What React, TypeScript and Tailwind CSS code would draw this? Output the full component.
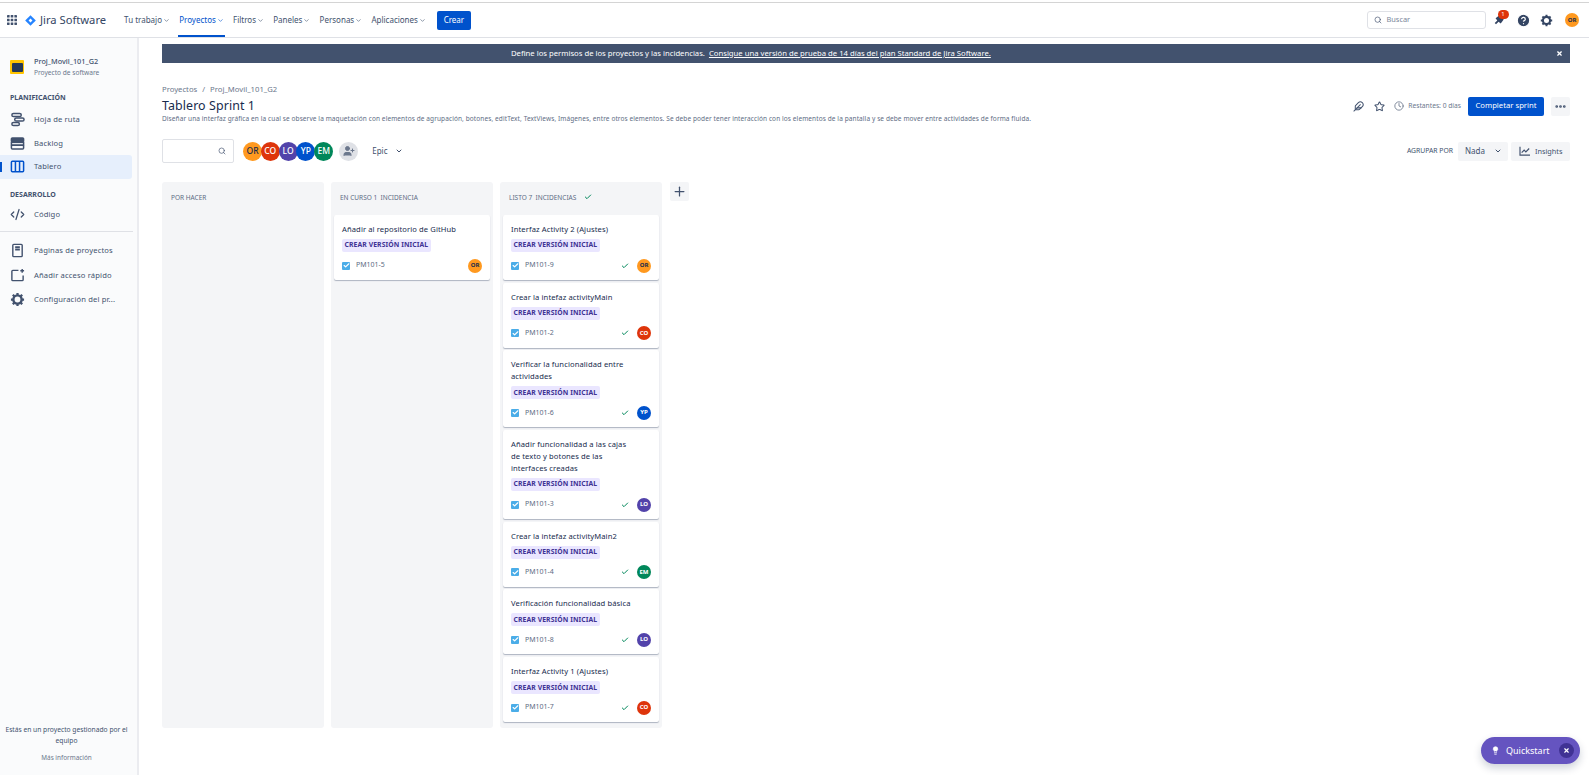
import { ChevronDown, Search, HelpCircle, X, Star, Clock, Plus, Check, MoreHorizontal, CodeXml, Lightbulb, UserPlus, Feather } from 'lucide-react'

const people: Record<string, string> = {
  OR: 'bg-[#ff991f] text-[#172b4d]',
  CO: 'bg-[#de350b] text-white',
  LO: 'bg-[#5243aa] text-white',
  YP: 'bg-[#0052cc] text-white',
  EM: 'bg-[#00875a] text-white',
}

const navItems = ['Tu trabajo', 'Proyectos', 'Filtros', 'Paneles', 'Personas', 'Aplicaciones']

const doneCards = [
  { lines: ['Interfaz Activity 2 (Ajustes)'], id: 'PM101-9', who: 'OR' },
  { lines: ['Crear la intefaz activityMain'], id: 'PM101-2', who: 'CO' },
  { lines: ['Verificar la funcionalidad entre', 'actividades'], id: 'PM101-6', who: 'YP' },
  { lines: ['Añadir funcionalidad a las cajas', 'de texto y botones de las', 'interfaces creadas'], id: 'PM101-3', who: 'LO' },
  { lines: ['Crear la intefaz activityMain2'], id: 'PM101-4', who: 'EM' },
  { lines: ['Verificación funcionalidad básica'], id: 'PM101-8', who: 'LO' },
  { lines: ['Interfaz Activity 1 (Ajustes)'], id: 'PM101-7', who: 'CO' },
]

function Card({ lines, id, who, done }: { lines: string[]; id: string; who: string; done?: boolean }) {
  return (
    <div className="bg-white rounded-[2px] shadow-[0_1px_1px_rgba(9,30,66,0.3)] px-[8px] pt-[8px] pb-[7px] w-[156px] mx-auto">
      {lines.map((l) => (
        <div key={l} className="text-[7.6px] leading-[12px] text-[#172b4d] tracking-[0.1px] whitespace-nowrap">{l}</div>
      ))}
      <div className="mt-[4px] w-fit h-[13px] flex items-center bg-[#eae6ff] rounded-[2px] px-[2.5px] text-[6.8px] font-bold tracking-[0.1px] text-[#403294] whitespace-nowrap">
        CREAR VERSIÓN INICIAL
      </div>
      <div className="mt-[6px] flex items-center h-[15px]">
        <span className="w-[8px] h-[8px] rounded-[1px] bg-[#4bade8] flex items-center justify-center">
          <Check className="w-[7px] h-[7px] text-white" strokeWidth={4} />
        </span>
        <span className="ml-[6px] text-[7px] text-[#5e6c84]">{id}</span>
        <span className="flex-1" />
        {done && <Check className="w-[8px] h-[8px] text-[#00875a] mr-[8px]" strokeWidth={3} />}
        <span className={`w-[14px] h-[14px] rounded-full flex items-center justify-center text-[6px] font-bold ${people[who]}`}>{who}</span>
      </div>
    </div>
  )
}

function Grid() {
  return (
    <svg viewBox="0 0 10 10" className="w-[10px] h-[10px] text-[#42526e]" fill="currentColor">
      {[0, 3.7, 7.4].map((y) => [0, 3.7, 7.4].map((x) => <rect key={`${x}-${y}`} x={x} y={y} width="2.6" height="2.6" rx="0.4" />))}
    </svg>
  )
}

// Jira's cog: a thick ring with eight short teeth
function Gear({ className }: { className: string }) {
  return (
    <svg viewBox="0 0 16 16" className={className} fill="none" stroke="currentColor">
      <circle cx="8" cy="8" r="4.4" strokeWidth="2.6" />
      <path d="M8 1v2.4M8 12.6V15M1 8h2.4M12.6 8H15M3 3l1.7 1.7M11.3 11.3 13 13M13 3l-1.7 1.7M4.7 11.3 3 13" strokeWidth="2.4" />
    </svg>
  )
}

function NavIcon({ name }: { name: string }) {
  const cls = 'w-[15px] h-[15px] text-[#42526e]'
  if (name === 'road') return (
    <svg viewBox="0 0 16 16" className={cls} fill="none" stroke="currentColor" strokeWidth="1.6">
      <rect x="2" y="1.5" width="10" height="3.4" rx="1.7" /><rect x="5" y="6.3" width="10" height="3.4" rx="1.7" /><rect x="2" y="11.1" width="8" height="3.4" rx="1.7" />
    </svg>
  )
  if (name === 'backlog') return (
    <svg viewBox="0 0 16 16" className={cls} fill="none" stroke="currentColor" strokeWidth="1.6">
      <rect x="1.5" y="2" width="13" height="4" rx="1" fill="currentColor" /><rect x="1.5" y="6.8" width="13" height="3" /><rect x="1.5" y="9.8" width="13" height="4" rx="1" />
    </svg>
  )
  if (name === 'board') return (
    <svg viewBox="0 0 16 16" className="w-[15px] h-[15px] text-[#0052cc]" fill="none" stroke="currentColor" strokeWidth="1.6">
      <rect x="1.5" y="2.5" width="13" height="11" rx="1" /><path d="M5.8 2.5v11M10.2 2.5v11" />
    </svg>
  )
  if (name === 'code') return <CodeXml className={cls} strokeWidth={2} />
  if (name === 'pages') return (
    <svg viewBox="0 0 16 16" className={cls} fill="none" stroke="currentColor" strokeWidth="1.5">
      <rect x="3" y="1.5" width="10" height="13" rx="1" /><path d="M5.5 4.5h5M5.5 7h5" strokeWidth="2" />
    </svg>
  )
  if (name === 'add') return (
    <svg viewBox="0 0 16 16" className={cls} fill="none" stroke="currentColor" strokeWidth="1.5">
      <path d="M9 2.5H3a1 1 0 0 0-1 1v9a1 1 0 0 0 1 1h10a1 1 0 0 0 1-1V8" /><path d="M13 1v4M11 3h4" />
    </svg>
  )
  return <Gear className={cls} />
}

function SideLink({ icon, label, active }: { icon: string; label: string; active?: boolean }) {
  return (
    <div className={`relative h-[23.5px] w-[132px] flex items-center pl-[10px] rounded-r-[3px] ${active ? 'bg-[#e6effc]' : ''}`}>
      {active && <span className="absolute left-0 top-[7px] w-[2px] h-[10px] bg-[#0052cc]" />}
      <NavIcon name={icon} />
      <span className="ml-[9px] text-[7.6px] tracking-[0.15px] text-[#42526e] whitespace-nowrap">{label}</span>
    </div>
  )
}

export default function App() {
  return (
    <div className="relative h-[775px] w-[1589px] overflow-hidden bg-white font-['Noto_Sans',sans-serif] text-[#172b4d]">
      {/* Top bar */}
      <header className="h-[36px] border-t-[1px] border-b-[1px] border-t-[#d4d4d4] border-b-[#dfe1e6] mt-[2px] flex items-center pl-[7px] pr-[10px]">
        <Grid />
        <svg viewBox="0 0 12 12" className="w-[11px] h-[11px] ml-[8px]">
          <path d="M6 0.2 11.8 6 6 11.8 0.2 6Z" fill="#2684ff" /><path d="M6 3.9 8.1 6 6 8.1 3.9 6Z" fill="#fff" />
        </svg>
        <span className="ml-[4px] text-[11.2px] text-[#344563] whitespace-nowrap">Jira Software</span>
        <nav className="ml-[17px] flex h-full items-stretch gap-[7.2px]">
          {navItems.map((n) => (
            <div key={n} className={`relative flex items-center px-[1px] text-[8px] whitespace-nowrap ${n === 'Proyectos' ? 'text-[#0052cc]' : 'text-[#42526e]'}`}>
              {n}
              <ChevronDown className="w-[7px] h-[7px] ml-[1px]" />
              {n === 'Proyectos' && <span className="absolute left-0 right-0 bottom-0 h-[2px] bg-[#0052cc]" />}
            </div>
          ))}
        </nav>
        <button className="ml-[10px] h-[19px] w-[34px] rounded-[2px] bg-[#0052cc] text-white text-[8px]">Crear</button>
        <div className="ml-auto w-[119px] h-[18px] rounded-[3px] border border-[#dfe1e6] flex items-center pl-[6px] text-[7.4px] text-[#7a869a]">
          <Search className="w-[8px] h-[8px] text-[#42526e] mr-[5px]" />
          Buscar
        </div>
        <div className="relative ml-[6px] w-[14px] flex justify-center">
          <svg viewBox="0 0 14 14" className="w-[12px] h-[12px] text-[#344563]" fill="currentColor">
            <path d="M7.5 1.5 12.5 6.5 9 11 6.5 9 3.5 12 2 10.5 5 7.5 3 5Z" />
          </svg>
          <span className="absolute -top-[4px] left-[6px] w-[11px] h-[9px] rounded-full bg-[#de350b] text-white text-[6px] leading-[9px] text-center">1</span>
        </div>
        <HelpCircle className="ml-[10.5px] w-[15px] h-[15px] text-white fill-[#344563]" strokeWidth={2} />
        <Gear className="ml-[9px] w-[13px] h-[13px] text-[#344563]" />
        <span className="ml-[12px] w-[14px] h-[14px] rounded-full bg-[#ff991f] text-[#172b4d] text-[6px] font-bold flex items-center justify-center">OR</span>
      </header>

      <div className="flex h-[737px]">
        {/* Sidebar */}
        <aside className="w-[139px] shrink-0 h-full border-r-2 border-[#ebecf0] bg-[#fafbfc] flex flex-col pt-[18px]">
          <div className="flex items-center pl-[10px]">
            <span className="w-[14px] h-[14px] rounded-[1px] bg-[#ffc400] flex items-center justify-center">
              <span className="w-[11px] h-[9px] rounded-[1px] bg-[#253858]" />
            </span>
            <div className="ml-[10px]">
              <div className="text-[7.3px] leading-[11px] font-medium text-[#42526e] whitespace-nowrap">Proj_Movil_101_G2</div>
              <div className="text-[6.6px] leading-[11px] text-[#6b778c] whitespace-nowrap">Proyecto de software</div>
            </div>
          </div>
          <div className="mt-[14px] pl-[10px] text-[7px] leading-[12px] font-bold text-[#42526e]">PLANIFICACIÓN</div>
          <div className="mt-[4px] flex flex-col">
            <SideLink icon="road" label="Hoja de ruta" />
            <SideLink icon="backlog" label="Backlog" />
            <SideLink icon="board" label="Tablero" active />
          </div>
          <div className="mt-[10px] pl-[10px] text-[7px] leading-[12px] font-bold text-[#42526e]">DESARROLLO</div>
          <div className="mt-[2px]"><SideLink icon="code" label="Código" /></div>
          <div className="mt-[5px] w-[133px] border-t border-[#dfe1e6]" />
          <div className="mt-[7px] flex flex-col gap-[1px]">
            <SideLink icon="pages" label="Páginas de proyectos" />
            <SideLink icon="add" label="Añadir acceso rápido" />
            <SideLink icon="settings" label="Configuración del pr..." />
          </div>
          <div className="mt-auto pb-[12px] pl-[2px] pr-[6px] text-center">
            <div className="text-[6.7px] leading-[11px] text-[#42526e]">Estás en un proyecto gestionado por el equipo</div>
            <div className="mt-[6px] text-[6.4px] leading-[11px] text-[#6b778c]">Más información</div>
          </div>
        </aside>

        {/* Main */}
        <main className="flex-1 min-w-0 pl-[23px] pr-[19px] pt-[6px]">
          <div className="relative h-[19px] bg-[#42526e] flex items-center pl-[349px] text-[7.7px] text-white">
            <span>Define los permisos de los proyectos y las incidencias.&nbsp; <span className="underline">Consigue una versión de prueba de 14 días del plan Standard de Jira Software.</span></span>
            <X className="absolute right-[7px] w-[7px] h-[7px]" strokeWidth={4} />
          </div>

          <div className="mt-[20px] flex gap-[5px] text-[7.7px] leading-[12px] text-[#6b778c] whitespace-nowrap">
            <span>Proyectos</span><span>/</span><span>Proj_Movil_101_G2</span>
          </div>
          <div className="flex items-center h-[21px] pt-[1px]">
            <h1 className="text-[12.4px] text-[#172b4d] tracking-[0.1px]">Tablero Sprint 1</h1>
            <div className="ml-auto flex items-center">
              <Feather className="w-[11px] h-[11px] text-[#42526e]" strokeWidth={2.2} />
              <Star className="ml-[10px] w-[11px] h-[11px] text-[#42526e]" strokeWidth={2.2} />
              <Clock className="ml-[9px] w-[10px] h-[10px] text-[#6b778c]" />
              <span className="ml-[4px] text-[6.7px] text-[#6b778c] whitespace-nowrap">Restantes: 0 días</span>
              <button className="ml-[7px] h-[19px] w-[76px] rounded-[2px] bg-[#0052cc] text-white text-[7.7px]">Completar sprint</button>
              <span className="ml-[7px] w-[19px] h-[19px] rounded-[2px] bg-[#f4f5f7] flex items-center justify-center">
                <MoreHorizontal className="w-[13px] h-[13px] text-[#42526e]" strokeWidth={3} />
              </span>
            </div>
          </div>
          <p className="-mt-[2px] text-[6.5px] leading-[10px] tracking-[0.1px] text-[#5e6c84] whitespace-nowrap">
            Diseñar una interfaz gráfica en la cual se observe la maquetación con elementos de agrupación, botones, editText, TextViews, Imágenes, entre otros elementos. Se debe poder tener interacción con los elementos de la pantalla y se debe mover entre actividades de forma fluida.
          </p>

          {/* Filters */}
          <div className="mt-[15px] flex items-center h-[24px]">
            <div className="w-[72px] h-[24px] rounded-[2px] border border-[#dfe1e6] flex items-center justify-end pr-[7px]">
              <Search className="w-[8px] h-[8px] text-[#42526e]" />
            </div>
            <div className="ml-[9px] flex">
              {Object.keys(people).map((p, i) => (
                <span key={p} className={`w-[19px] h-[19px] rounded-full flex items-center justify-center text-[8.5px] font-medium ${i > 0 ? '-ml-[1.2px]' : ''} ${people[p]}`}>{p}</span>
              ))}
            </div>
            <span className="ml-[6px] w-[19px] h-[19px] rounded-full bg-[#dfe1e6] flex items-center justify-center">
              <UserPlus className="w-[12px] h-[12px] text-[#6b778c] fill-[#6b778c]" />
            </span>
            <span className="ml-[14px] text-[8px] text-[#42526e]">Epic</span>
            <ChevronDown className="ml-[7px] w-[8px] h-[8px] text-[#42526e]" strokeWidth={3} />
            <div className="ml-auto flex items-center">
              <span className="text-[6.8px] text-[#42526e]">AGRUPAR POR</span>
              <span className="ml-[5px] w-[50px] h-[19px] rounded-[2px] bg-[#f4f5f7] flex items-center pl-[7px] text-[8px] text-[#42526e]">
                Nada<ChevronDown className="ml-[9px] w-[8px] h-[8px]" strokeWidth={3} />
              </span>
              <span className="ml-[3px] w-[59px] h-[19px] rounded-[2px] bg-[#f4f5f7] flex items-center pl-[8px] text-[7.3px] text-[#42526e]">
                <svg viewBox="0 0 14 12" className="w-[12px] h-[10px] mr-[4px]" fill="none" stroke="currentColor" strokeWidth="1.4">
                  <path d="M1 1v10h12M3 8l3-3 2 2 4-4" />
                </svg>
                Insights
              </span>
            </div>
          </div>

          {/* Board */}
          <div className="mt-[19px] flex gap-[7px] items-start">
            <section className="w-[162px] h-[546px] rounded-[3px] bg-[#f4f5f7] pt-[11px] pl-[9px] text-[6.5px] leading-[10px] text-[#5e6c84]">POR HACER</section>
            <section className="w-[162px] h-[546px] rounded-[3px] bg-[#f4f5f7]">
              <div className="h-[33px] pt-[11px] pl-[9px] text-[6.5px] leading-[10px] text-[#5e6c84]">EN CURSO 1&nbsp; INCIDENCIA</div>
              <Card lines={['Añadir al repositorio de GitHub']} id="PM101-5" who="OR" />
            </section>
            <section className="w-[162px] h-[546px] rounded-[3px] bg-[#f4f5f7]">
              <div className="h-[33px] pt-[11px] pl-[9px] text-[6.5px] leading-[10px] text-[#5e6c84] flex items-start">
                LISTO 7&nbsp; INCIDENCIAS
                <Check className="ml-[8px] w-[8px] h-[8px] text-[#00875a]" strokeWidth={3} />
              </div>
              <div className="flex flex-col gap-[2.7px]">
                {doneCards.map((c) => <Card key={c.id} {...c} done />)}
              </div>
            </section>
            <span className="ml-[1px] w-[19px] h-[19px] rounded-[2px] bg-[#f4f5f7] flex items-center justify-center">
              <Plus className="w-[15px] h-[15px] text-[#42526e]" />
            </span>
          </div>
        </main>
      </div>

      {/* Quickstart */}
      <div className="absolute left-[1481px] top-[737px] w-[99px] h-[27px] rounded-full bg-[#6554c0] shadow-[0_4px_8px_rgba(9,30,66,0.2)] flex items-center pl-[10px] text-white text-[9px]">
        <Lightbulb className="w-[9px] h-[9px] fill-white" />
        <span className="ml-[6px]">Quickstart</span>
        <span className="absolute right-[6px] top-[6px] w-[15px] h-[15px] rounded-full bg-[#403294] flex items-center justify-center">
          <X className="w-[7px] h-[7px]" strokeWidth={4} />
        </span>
      </div>
    </div>
  )
}
